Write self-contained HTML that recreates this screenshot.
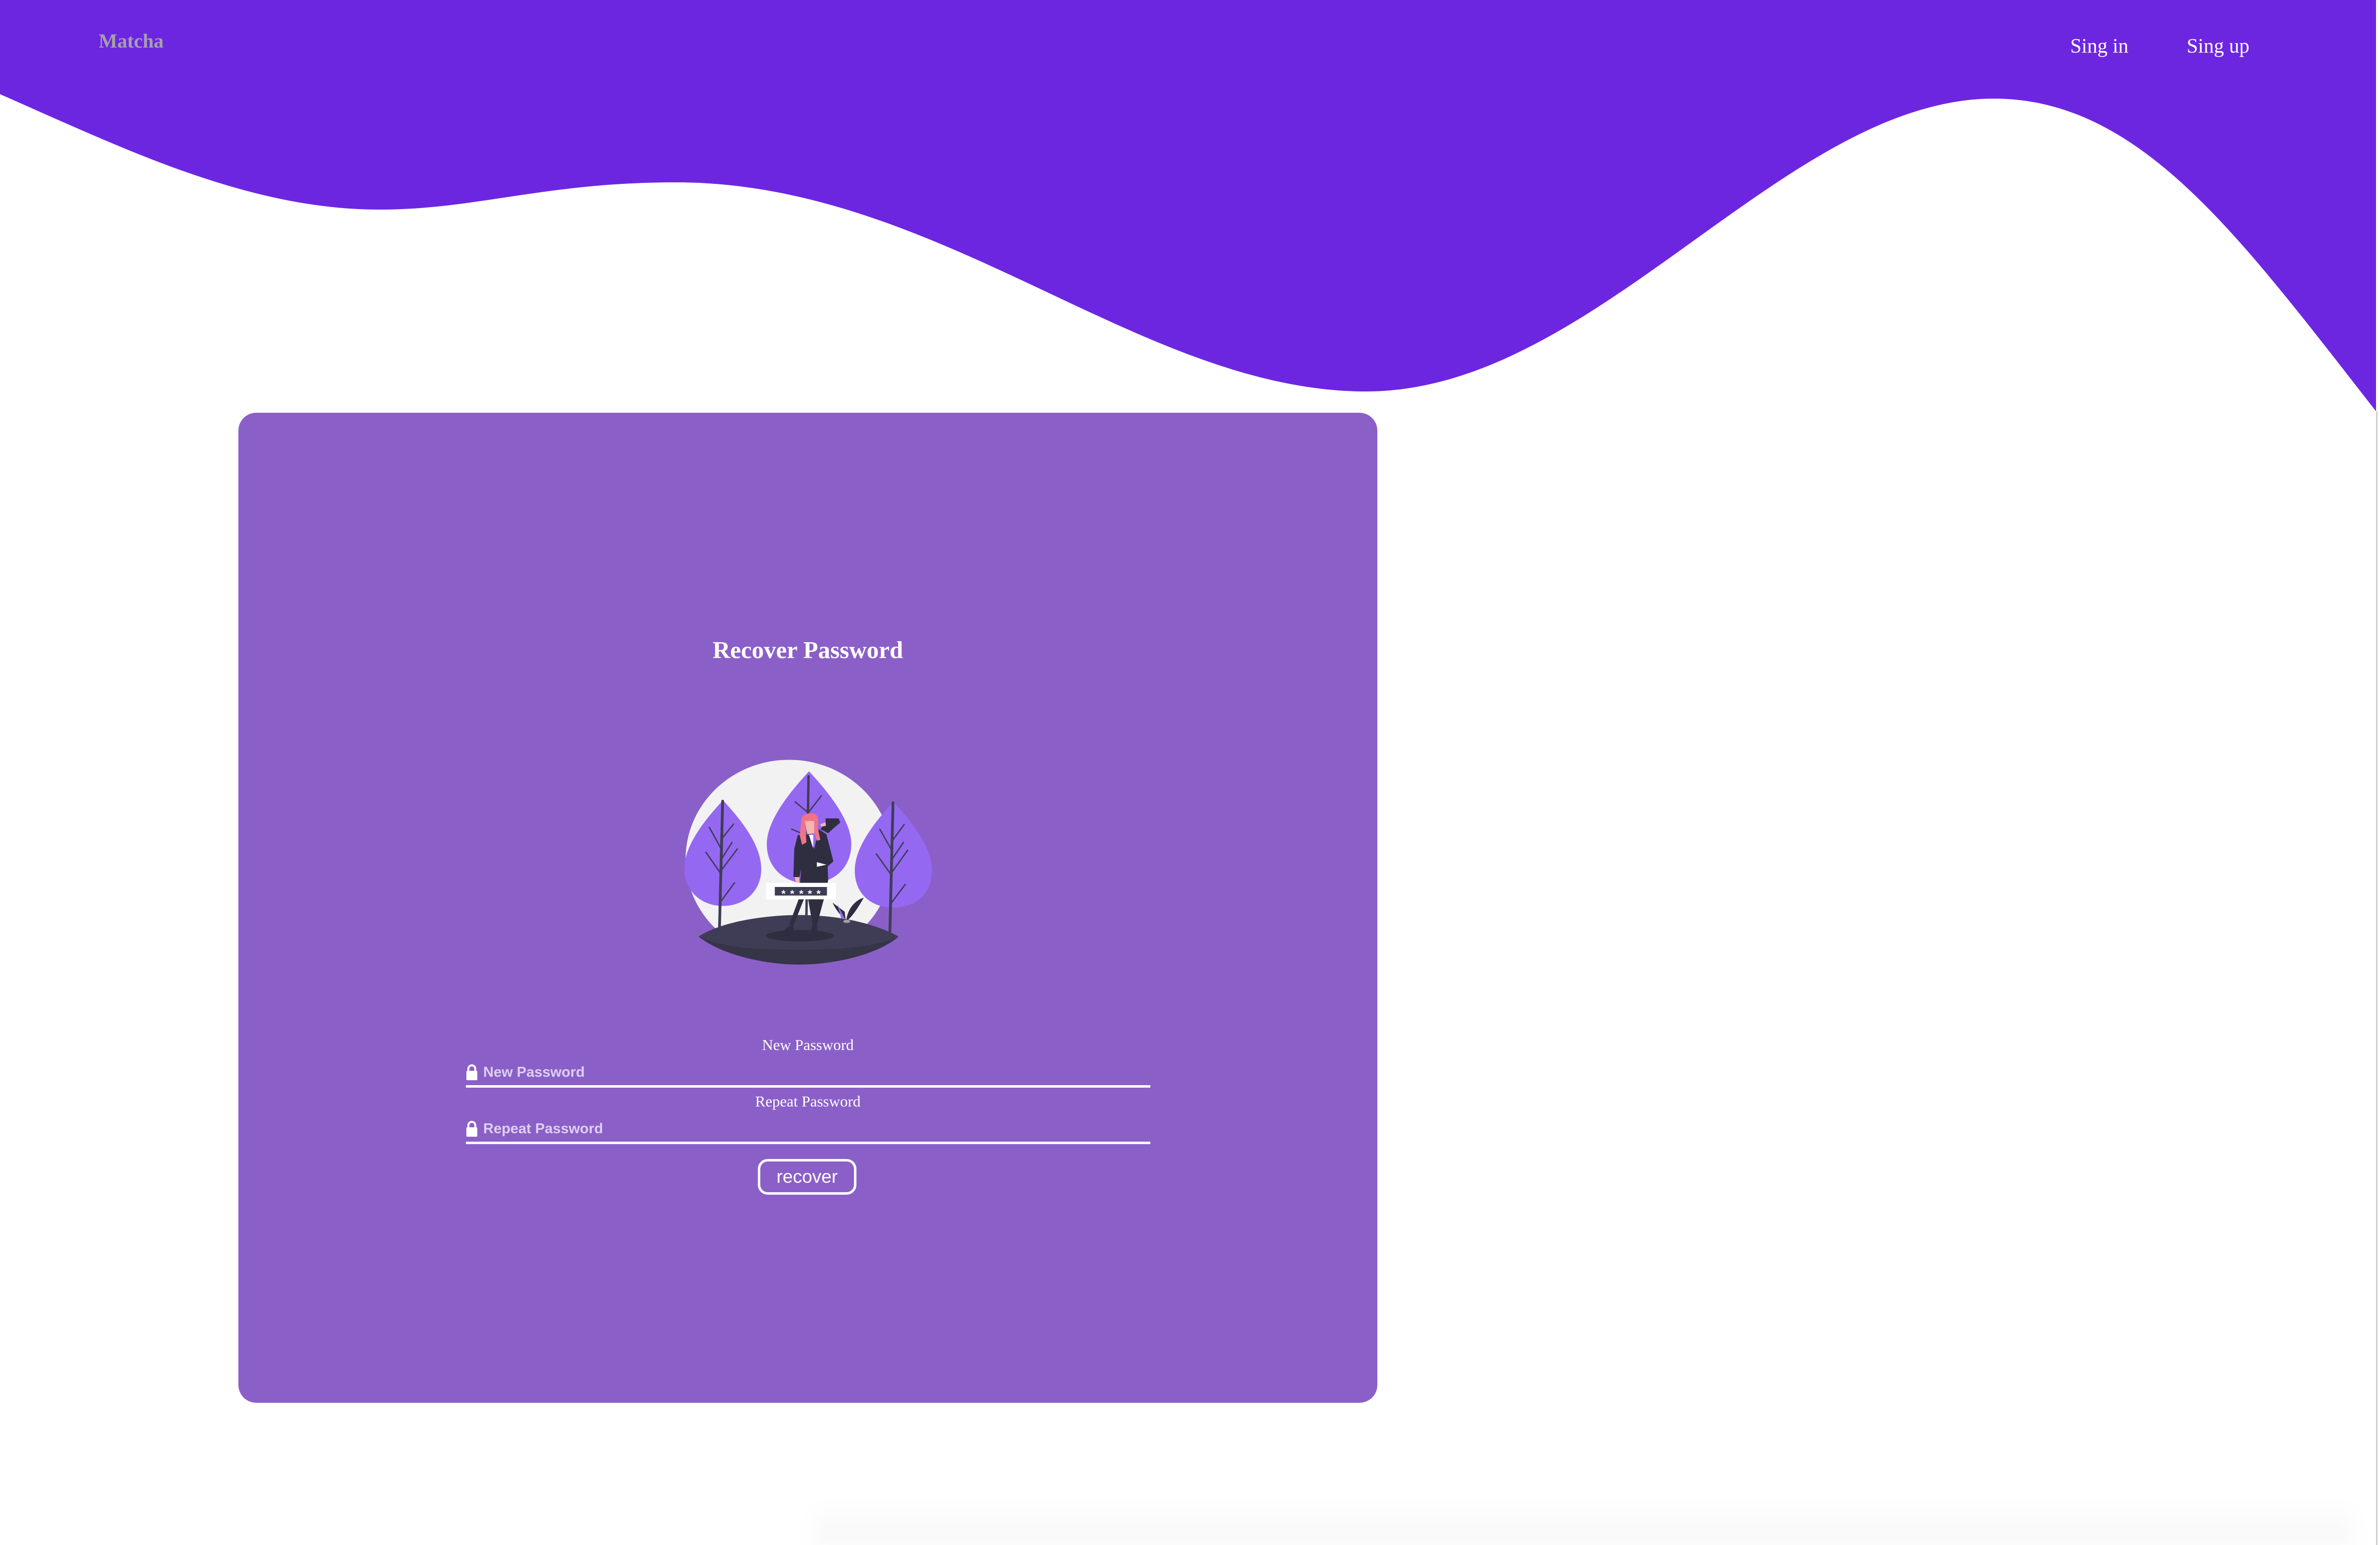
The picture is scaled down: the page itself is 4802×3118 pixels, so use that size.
<!DOCTYPE html>
<html><head><meta charset="utf-8"><style>
html,body{margin:0;padding:0;width:4802px;height:3118px;overflow:hidden;}
body{position:relative;background:#fff;font-family:"Liberation Serif",serif;}
.abs{position:absolute;}
.t{position:absolute;white-space:nowrap;line-height:1;}
</style></head><body>
<svg class="abs" style="left:0;top:0" width="4802" height="900" viewBox="0 0 4802 900">
<path d="M0,0 H4794 V830 C4520,480 4320,199 4023,199 C3600,199 3220,790 2757,790 C2300,790 1900,368 1363,368 C1100,368 960,423 766,423 C500,423 250,300 0,190 Z" fill="#6d26e0"/>
</svg>
<div class="abs" style="left:4794px;top:830px;width:3px;height:2288px;background:#cfcfcf"></div>
<div class="abs" style="left:1640px;top:3030px;width:3110px;height:88px;background:linear-gradient(to bottom,rgba(0,0,0,0),rgba(0,0,0,0.035));filter:blur(20px)"></div>

<div class="t" style="left:199px;top:63px;font-size:40px;font-weight:bold;color:#a5a0aa">Matcha</div>
<div class="t" style="left:4177px;top:72px;font-size:41px;color:#fff">Sing in</div>
<div class="t" style="left:4412px;top:72px;font-size:41px;color:#fff">Sing up</div>

<div class="abs" style="left:481px;top:833px;width:2298px;height:1998px;background:#8b5fc8;border-radius:36px"></div>

<div class="t" style="left:481px;width:2298px;text-align:center;top:1287px;font-size:49px;font-weight:bold;color:#fff">Recover Password</div>

<svg class="abs" style="left:1350px;top:1500px" width="550" height="470" viewBox="0 0 1568 1410" preserveAspectRatio="none">
<ellipse cx="690" cy="700" rx="595" ry="600" fill="#f2f2f2"/>
<path d="M310,345 C420,470 530,620 530,760 C530,900 430,985 310,985 C190,985 88,900 88,760 C88,620 200,470 310,345Z" fill="#9568f2"/>
<path d="M805,170 C920,300 1048,470 1048,610 C1048,760 940,850 805,850 C670,850 562,760 562,610 C562,470 690,300 805,170Z" fill="#9568f2"/>
<path d="M1290,355 C1400,480 1512,630 1512,770 C1512,910 1420,995 1290,995 C1160,995 1068,910 1068,770 C1068,630 1180,480 1290,355Z" fill="#9568f2"/>
<g stroke="#3f3d56" fill="none" stroke-linecap="round">
<path d="M308,350 L290,1110" stroke-width="16"/>
<path d="M300,640 L232,510 M302,580 L370,490 M298,790 L212,660 M300,770 L392,640 M302,700 L362,600 M296,960 L376,845" stroke-width="8"/>
<path d="M802,200 L790,1040" stroke-width="14"/>
<path d="M800,420 L725,355 M800,420 L876,318 M795,560 L705,520" stroke-width="8"/>
<path d="M1288,360 L1270,1140" stroke-width="16"/>
<path d="M1282,650 L1212,520 M1284,590 L1352,492 M1280,800 L1192,670 M1282,780 L1372,648 M1284,700 L1348,600 M1276,970 L1358,855" stroke-width="8"/>
</g>
<path d="M170,1170 C300,1080 550,1040 750,1040 C1000,1040 1200,1100 1320,1170 C1200,1280 950,1340 745,1340 C550,1340 300,1280 170,1170Z" fill="#3f3d56"/>
<path d="M170,1170 C300,1240 550,1250 750,1250 C1000,1250 1200,1230 1320,1170 C1200,1280 950,1340 745,1340 C550,1340 300,1280 170,1170Z" fill="#363447"/>
<ellipse cx="752" cy="1165" rx="195" ry="35" fill="#2f2e41"/>
<path d="M940,965 C960,1010 990,1050 1015,1065 L1010,1020 Z" fill="#2f2e41"/>
<path d="M1020,1065 C1030,1000 1070,950 1120,935 C1090,990 1060,1040 1030,1068Z" fill="#2f2e41"/>
<path d="M968,975 L1010,1060 L990,1060Z" fill="#9568f2"/>
<ellipse cx="1022" cy="1078" rx="20" ry="10" fill="#a0a0a0"/>
<path d="M740,555 L720,640 L715,810 L750,810 L760,760 L745,945 L690,1100 L715,1105 L775,945 L800,945 L825,1100 L850,1100 L890,945 L915,830 L912,745 L945,715 L905,550 L860,520 L835,640 L805,560Z" fill="#2f2e41"/>
<path d="M870,520 L900,480 L900,455 L975,455 L985,480 L940,520 L915,545Z" fill="#2f2e41"/>
<path d="M805,555 L830,555 L828,635 Z" fill="#fff"/>
<path d="M850,720 L905,735 L850,748Z" fill="#fff"/>
<path d="M722,810 L748,810 L750,860 L735,862Z" fill="#f5b5b0"/>
<path d="M780,470 L835,470 L835,545 L795,550 Z" fill="#f5b5b0"/>
<path d="M870,490 L900,478 L902,500 L875,505Z" fill="#f5b5b0"/>
<path d="M760,470 C760,430 800,420 830,425 C860,430 860,470 855,510 L870,585 L850,590 L835,540 L835,470 L780,470 L790,600 L765,615 L752,560 Z" fill="#f07388"/>
<path d="M690,1105 L715,1105 L718,1140 L690,1165 L630,1175 L615,1160 L665,1130Z" fill="#2f2e41"/>
<path d="M825,1100 L850,1100 L855,1175 L830,1180 L810,1150Z" fill="#2f2e41"/>
<rect x="557" y="845" width="403" height="100" fill="#fff"/>
<rect x="608" y="870" width="300" height="52" fill="#3f3d56"/>
<g fill="#fff" font-family="Liberation Sans, sans-serif" font-size="62" font-weight="bold" text-anchor="middle">
<text x="658" y="932">*</text><text x="708" y="932">*</text><text x="760" y="932">*</text><text x="810" y="932">*</text><text x="860" y="932">*</text>
</g>
</svg>

<div class="t" style="left:481px;width:2298px;text-align:center;top:2093px;font-size:31px;color:#fff">New Password</div>
<svg class="abs" style="left:940px;top:2148px" width="24" height="32" viewBox="0 0 24 32"><path d="M5,14 V9 A7,7 0 0 1 19,9 V14" fill="none" stroke="#fff" stroke-width="4"/><rect x="1" y="13" width="22" height="19" rx="2" fill="#fff"/></svg>
<div class="t" style="left:975px;top:2150px;font-family:'Liberation Sans',sans-serif;font-weight:bold;font-size:29px;color:#ddd0f0">New Password</div>
<div class="abs" style="left:940px;top:2190px;width:1381px;height:5px;background:#fff"></div>

<div class="t" style="left:481px;width:2298px;text-align:center;top:2207px;font-size:31px;color:#fff">Repeat Password</div>
<svg class="abs" style="left:940px;top:2262px" width="24" height="32" viewBox="0 0 24 32"><path d="M5,14 V9 A7,7 0 0 1 19,9 V14" fill="none" stroke="#fff" stroke-width="4"/><rect x="1" y="13" width="22" height="19" rx="2" fill="#fff"/></svg>
<div class="t" style="left:975px;top:2264px;font-family:'Liberation Sans',sans-serif;font-weight:bold;font-size:29px;color:#ddd0f0">Repeat Password</div>
<div class="abs" style="left:940px;top:2304px;width:1381px;height:5px;background:#fff"></div>

<div class="abs" style="left:1529px;top:2339px;width:189px;height:62px;border:5px solid #fff;border-radius:20px;color:#fff;font-family:'Liberation Sans',sans-serif;font-size:37px;text-align:center;line-height:62px">recover</div>
</body></html>
